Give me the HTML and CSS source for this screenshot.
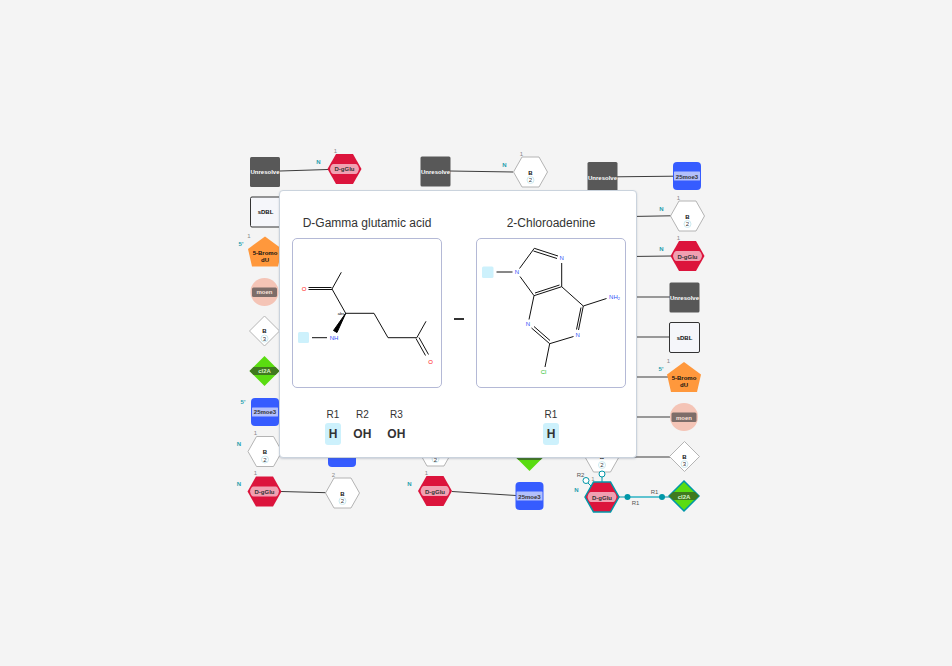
FILE: index.html
```html
<!DOCTYPE html>
<html lang="en">
<head>
<meta charset="utf-8">
<title>Monomer connection preview</title>
<link rel="stylesheet" href="styles.css">
</head>
<body>
<main class="page">
  <div class="stage">
    <svg class="canvas" viewBox="236 148 480 370" aria-label="Monomer chains">
      <defs>
        <rect id="square" x="-15" y="-15" width="30" height="30" rx="1.5"/>
        <path id="hex" d="M-17 0L-8.500-15H8.500L17 0L8.500 15H-8.500Z"/>
        <path id="diamond" d="M0-15L15 0L0 15L-15 0Z"/>
        <path id="penta" d="M0-15.500L17-3L13 14.500H-13L-17-3Z"/>
        <rect id="rounded" x="-14" y="-14" width="28" height="28" rx="4"/>
        <path id="hex-label" d="M-11-5H11Q13.500-5 14.500 0Q13.500 5 11 5H-11Q-13.500 5-14.500 0Q-13.500-5-11-5Z"/>
        <rect id="blue-label" x="-13" y="-4.500" width="26" height="9" rx="0.500"/>
        <rect id="moen-label" x="-12.500" y="-4.500" width="25" height="9.500" rx="1.500"/>
        <path id="band" d="M-11-4H11L15 0L11 4H-11L-15 0Z"/>
      </defs>

      <g class="bonds">
        <path d="M280 171L328 169.500M281 491.500L326 492.700M450 171L513 172M452 491.500L516 495.500M617 176.800L674 176.200M630 216.500L671 215.800M630 256.500L671 256"/>
        <path d="M630 297H670M630 337H670M630 377H668M630 417H670M630 457H670"/>
      </g>

      <g transform="translate(265 172)"><use href="#square" class="gray"/><text class="on-dark" y="2">Unresolve</text></g>
      <g transform="translate(344.500 169)"><use href="#hex" class="red"/><use href="#hex-label" class="pink"/><text y="2">D-gGlu</text></g>
      <text class="end" x="318.500" y="164">N</text><text class="num" x="335.500" y="153">1</text>

      <g transform="translate(265.500 212)"><use href="#square" class="box"/><text class="black" y="2">sDBL</text></g>
      <g transform="translate(265 252)"><use href="#penta" class="orange"/><text class="black" y="3">5-Bromo</text><text class="black" y="10">dU</text></g>
      <text class="end" x="241" y="246">5'</text><text class="num" x="249" y="238">1</text>
      <g transform="translate(264.500 292)"><circle r="14" class="salmon"/><use href="#moen-label" class="brown"/><text class="on-brown" y="2">moen</text></g>
      <g transform="translate(264.500 331)"><use href="#diamond" class="white"/><text class="black" y="2">B</text><circle class="ring" cy="7.500" r="3.500"/><text class="count" y="9.500">3</text></g>
      <g transform="translate(264.500 371)"><use href="#diamond" class="green"/><use href="#band" class="forest"/><text class="on-green" y="2">cl2A</text></g>
      <g transform="translate(265 412)"><use href="#rounded" class="blue"/><use href="#blue-label" class="lilac"/><text y="2">25moe3</text></g>
      <text class="end" x="243" y="404">5'</text>
      <g transform="translate(265 451.500)"><use href="#hex" class="white"/><text class="black" y="2">B</text><circle class="ring" cy="8" r="3.500"/><text class="count" y="10">2</text></g>
      <text class="end" x="239" y="446">N</text><text class="num" x="255.500" y="435">1</text>
      <g transform="translate(264.500 491.500)"><use href="#hex" class="red"/><use href="#hex-label" class="pink"/><text y="2">D-gGlu</text></g>
      <text class="end" x="239" y="486">N</text><text class="num" x="255.500" y="475">1</text>
      <g transform="translate(342.500 493)"><use href="#hex" class="white"/><text class="black" y="3">B</text><circle class="ring" cy="8" r="3.500"/><text class="count" y="10">2</text></g>
      <text class="num" x="333.500" y="477">2</text>
      <g transform="translate(342 453)"><use href="#rounded" class="blue"/></g>

      <g transform="translate(435.500 171.500)"><use href="#square" class="gray"/><text class="on-dark" y="2">Unresolve</text></g>
      <g transform="translate(530.500 172)"><use href="#hex" class="white"/><text class="black" y="3">B</text><circle class="ring" cy="8" r="3.500"/><text class="count" y="10">2</text></g>
      <text class="end" x="504.500" y="167">N</text><text class="num" x="521.500" y="156">1</text>
      <g transform="translate(435.500 451)"><use href="#hex" class="white"/><circle class="ring" cy="8" r="3.500"/><text class="count" y="11">2</text></g>
      <g transform="translate(529.500 456)"><use href="#diamond" class="green"/><use href="#band" class="forest"/></g>
      <g transform="translate(435 491)"><use href="#hex" class="red"/><use href="#hex-label" class="pink"/><text y="3">D-gGlu</text></g>
      <text class="end" x="409.500" y="486">N</text><text class="num" x="426.500" y="475">1</text>
      <g transform="translate(529.500 496)"><use href="#rounded" class="blue"/><use href="#blue-label" class="lilac"/><text y="3">25moe3</text></g>

      <g transform="translate(602.500 177)"><use href="#square" class="gray"/><text class="on-dark" y="3">Unresolve</text></g>
      <g transform="translate(687 176)"><use href="#rounded" class="blue"/><use href="#blue-label" class="lilac"/><text y="3">25moe3</text></g>
      <g transform="translate(687.500 216)"><use href="#hex" class="white"/><text class="black" y="3">B</text><circle class="ring" cy="8" r="3.500"/><text class="count" y="10">2</text></g>
      <text class="end" x="661.500" y="211">N</text><text class="num" x="678.500" y="200">1</text>
      <g transform="translate(687.500 256)"><use href="#hex" class="red"/><use href="#hex-label" class="pink"/><text y="3">D-gGlu</text></g>
      <text class="end" x="661.500" y="251">N</text><text class="num" x="678.500" y="240">1</text>
      <g transform="translate(684.500 297.500)"><use href="#square" class="gray"/><text class="on-dark" y="2">Unresolve</text></g>
      <g transform="translate(684.500 337.500)"><use href="#square" class="box"/><text class="black" y="2">sDBL</text></g>
      <g transform="translate(684 377.500)"><use href="#penta" class="orange"/><text class="black" y="2">5-Bromo</text><text class="black" y="9">dU</text></g>
      <text class="end" x="661" y="371">5'</text><text class="num" x="668.500" y="363">1</text>
      <g transform="translate(684 417)"><circle r="14" class="salmon"/><use href="#moen-label" class="brown"/><text class="on-brown" y="3">moen</text></g>
      <g transform="translate(684.500 456.500)"><use href="#diamond" class="white"/><text class="black" y="2">B</text><circle class="ring" cy="7.500" r="3.500"/><text class="count" y="9.500">3</text></g>

      <g transform="translate(602 457)"><use href="#hex" class="white"/><text class="black" y="2">B</text><circle class="ring" cy="8" r="3.500"/><text class="count" y="10">2</text></g>
      <g class="links">
        <path class="link-mid" d="M630 497H660"/>
        <path d="M602 476V483M588 483L592 487M618 497H627M663 497H670"/>
        <circle class="open" cx="602" cy="474" r="3"/>
        <circle class="open" cx="586" cy="480.500" r="3"/>
        <circle class="dot" cx="627.500" cy="497" r="3"/>
        <circle class="dot" cx="662" cy="497" r="3"/>
      </g>
      <g transform="translate(602 497)"><use href="#hex" class="red chosen"/><use href="#hex-label" class="pink"/><text y="3">D-gGlu</text></g>
      <g transform="translate(684 496)"><use href="#diamond" class="green chosen"/><use href="#band" class="forest"/><text class="on-green" y="3">cl2A</text></g>
      <text class="end" x="576.500" y="492">N</text><text class="num" x="593" y="481">1</text>
      <text class="site" x="580.500" y="477">R2</text>
      <text class="site" x="635.500" y="505">R1</text>
      <text class="site" x="654.500" y="494">R1</text>
    </svg>

    <section class="popup" aria-label="Connection preview">
      <article class="monomer">
        <h2 class="title">D-Gamma glutamic acid</h2>
        <div class="structure">
          <svg viewBox="293 239 148 148" aria-label="D-Gamma glutamic acid structure">
            <rect class="leaving" x="298" y="332" width="11" height="11" rx="1.500"/>
            <path class="bond" d="M341.300 272.300L332 289L345.700 313.300H374L388 337.700H416.800L426 321.300M308.500 287.500H331.500M308.500 289.500H332M312 337.700H327M416 338.500L425.500 355.500M419 337.500L428.500 354.500"/>
            <path class="wedge" d="M345.700 313.300L333.500 330.500L337 332.500Z"/>
            <text class="o" x="304" y="291">O</text>
            <text class="o" x="430.500" y="364">O</text>
            <text class="n" x="334" y="340">NH</text>
            <text class="abs" x="341" y="315">abs</text>
          </svg>
        </div>
        <dl class="groups">
          <div class="group"><dt>R1</dt><dd class="active">H</dd></div>
          <div class="group"><dt>R2</dt><dd>OH</dd></div>
          <div class="group"><dt>R3</dt><dd>OH</dd></div>
        </dl>
      </article>
      <span class="joint"></span>
      <article class="monomer">
        <h2 class="title">2-Chloroadenine</h2>
        <div class="structure">
          <svg viewBox="477 239 148 148" aria-label="2-Chloroadenine structure">
            <rect class="leaving" x="482" y="266.500" width="11.500" height="11.500" rx="1.500"/>
            <path class="bond" d="M496.500 272H512.500M519.500 268.500L534.300 248.300L558 256M533.500 251L557 258.500M561.700 263V286.700L534 295.700L520 276.500M559.500 285L535 293M561.700 286.700L583.300 306L606.500 298.500M583.300 306L578.500 330M581 307.500L576.500 329.500M573.500 336.500L549.700 343.700L531.500 328M550 340.500L534 326.500M534 295.700L529 319.500M549.700 343.700L545 367"/>
            <text class="n" x="517" y="274">N</text>
            <text class="n" x="561.700" y="260">N</text>
            <text class="n" x="528" y="326">N</text>
            <text class="n" x="577.700" y="337">N</text>
            <text class="n" x="614.500" y="299">NH<tspan class="sub" dy="1">2</tspan></text>
            <text class="cl" x="543.500" y="374">Cl</text>
          </svg>
        </div>
        <dl class="groups">
          <div class="group"><dt>R1</dt><dd class="active">H</dd></div>
        </dl>
      </article>
    </section>
  </div>
</main>
</body>
</html>
```
FILE: styles.css
```css
* { box-sizing: border-box; }

body {
  margin: 0;
  background: #f4f4f4;
  color: #333;
  font-family: "Liberation Sans", Arial, sans-serif;
}

.page {
  display: grid;
  place-items: center;
  min-height: 100vh;
}

.stage { position: relative; }

.canvas {
  display: block;
  width: 480px;
  height: 370px;
}

.canvas text {
  font: 700 6px "Liberation Sans", Arial, sans-serif;
  text-anchor: middle;
  fill: #333;
}

.canvas .on-dark { fill: #fff; }
.canvas .on-brown { fill: #fbe2da; }
.canvas .on-green { fill: #d9f5c8; }
.canvas .black { fill: #111; }
.canvas .end { fill: #1f9fae; }
.canvas .num { font-weight: 400; fill: #888; }
.canvas .site { font-weight: 400; fill: #555; }
.canvas .count { font-weight: 400; fill: #333; }

.gray { fill: #585858; }
.red { fill: #dc143c; }
.pink { fill: #f0a0b1; }
.box { fill: #f5f6fa; stroke: #333; }
.orange { fill: #ff983c; }
.salmon { fill: #f4c4b6; }
.brown { fill: #7d6d69; }
.white { fill: #fff; stroke: #b4b4b4; }
.ring { fill: #fff; stroke: #cdeaf0; }
.green { fill: #5adc11; }
.forest { fill: #40791f; }
.blue { fill: #365cff; }
.lilac { fill: #b3c0fb; }
.chosen { stroke: #0097a8; stroke-width: 1.5; }

.bonds { fill: none; stroke: #3c3c3c; }
.links { fill: none; stroke: #0097a8; }
.link-mid { stroke: #5fc3d0; stroke-width: 2; }
.open { fill: #fff; }
.dot { fill: #0097a8; stroke: none; }

.popup {
  position: absolute;
  top: 42px;
  left: 43px;
  display: flex;
  padding: 23px 10px 12px 12px;
  border: 1px solid #cad3dd;
  border-radius: 4px;
  background: #fff;
  box-shadow: 0 1px 2px rgba(80, 90, 120, 0.25);
}

.monomer { width: 150px; }

.title {
  margin: 0 0 6px;
  font-size: 12px;
  font-weight: 400;
  line-height: 18px;
  text-align: center;
  white-space: nowrap;
}

.structure {
  height: 150px;
  border: 1px solid #b4b9d6;
  border-radius: 5px;
}

.structure svg {
  display: block;
  width: 100%;
  height: 100%;
}

.structure text {
  font: 6px "Liberation Sans", Arial, sans-serif;
  text-anchor: middle;
}

.structure .n { fill: #304ff7; }
.structure .o { fill: #ff0d0d; }
.structure .cl { fill: #1fc01f; }
.structure .abs { font-size: 4px; }
.structure .sub { font-size: 4px; }

.leaving { fill: #cdf1fc; }
.bond { fill: none; stroke: #111; }
.wedge { fill: #000; stroke: #000; stroke-linejoin: round; }

.joint {
  align-self: flex-start;
  width: 10px;
  height: 2px;
  margin: 104px 12px 0;
  background: #333;
}

.groups {
  display: flex;
  justify-content: center;
  gap: 8px;
  margin: 19px 0 0;
}

.group { text-align: center; }

.group dt {
  font-size: 10px;
  line-height: 16px;
}

.group dd {
  margin: 0;
  padding: 0 4px;
  border-radius: 3px;
  font-size: 12px;
  font-weight: 700;
  line-height: 22px;
}

.group .active { background: #cdf1fc; }
```
